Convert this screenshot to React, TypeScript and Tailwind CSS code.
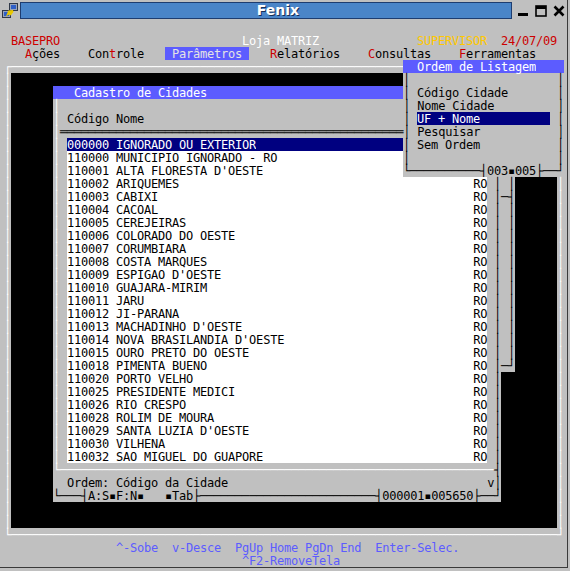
import React from 'react'

// Terminal screen: 80 cols x 42 rows, each cell 7x13 px
const COLS = 80
const ROWS = 42

type Cell = { ch: string; fg: string; bg: string }

const FG: Record<string, string> = {
  k: 'text-[#000000]',
  w: 'text-[#ffffff]',
  r: 'text-[#cd0000]',
  y: 'text-[#ffc800]',
  b: 'text-[#5c5cff]',
  l: 'text-[#e4e4e4]',
}

// gray cells stay transparent so descenders are not covered by the next row
const BG: Record<string, string> = {
  g: 'bg-transparent',
  k: 'bg-[#000000]',
  b: 'bg-[#5c5cff]',
  n: 'bg-[#000080]',
  w: 'bg-[#ffffff]',
}

const CITIES: [string, string][] = [
  ['000000', 'IGNORADO OU EXTERIOR'],
  ['110000', 'MUNICIPIO IGNORADO - RO'],
  ['110001', "ALTA FLORESTA D'OESTE"],
  ['110002', 'ARIQUEMES'],
  ['110003', 'CABIXI'],
  ['110004', 'CACOAL'],
  ['110005', 'CEREJEIRAS'],
  ['110006', 'COLORADO DO OESTE'],
  ['110007', 'CORUMBIARA'],
  ['110008', 'COSTA MARQUES'],
  ['110009', "ESPIGAO D'OESTE"],
  ['110010', 'GUAJARA-MIRIM'],
  ['110011', 'JARU'],
  ['110012', 'JI-PARANA'],
  ['110013', "MACHADINHO D'OESTE"],
  ['110014', "NOVA BRASILANDIA D'OESTE"],
  ['110015', 'OURO PRETO DO OESTE'],
  ['110018', 'PIMENTA BUENO'],
  ['110020', 'PORTO VELHO'],
  ['110025', 'PRESIDENTE MEDICI'],
  ['110026', 'RIO CRESPO'],
  ['110028', 'ROLIM DE MOURA'],
  ['110029', "SANTA LUZIA D'OESTE"],
  ['110030', 'VILHENA'],
  ['110032', 'SAO MIGUEL DO GUAPORE'],
]

function buildScreen() {
  const s: Cell[][] = Array.from({ length: ROWS }, () =>
    Array.from({ length: COLS }, () => ({ ch: ' ', fg: 'k', bg: 'g' }))
  )
  const put = (r: number, c: number, text: string, fg = 'k', bg?: string) => {
    ;[...text].forEach((ch, i) => {
      const cell = s[r]?.[c + i]
      if (!cell) return
      cell.ch = ch
      cell.fg = fg
      if (bg) cell.bg = bg
    })
  }
  const fill = (r0: number, r1: number, c0: number, c1: number, bg: string, ch = ' ', fg = 'k') => {
    for (let r = r0; r <= r1; r++)
      for (let c = c0; c <= c1; c++) s[r][c] = { ch, fg, bg }
  }

  // header
  put(1, 1, 'BASEPRO', 'r')
  put(1, 34, 'Loja MATRIZ', 'w')
  put(1, 59, 'SUPERVISOR', 'y')
  put(1, 71, '24/07/09', 'r')

  // menu
  put(2, 3, 'A', 'r'); put(2, 4, 'ções')
  put(2, 12, 'Con'); put(2, 15, 't', 'r'); put(2, 16, 'role')
  put(2, 23, ' Parâmetros ', 'l', 'b')
  put(2, 38, 'R', 'r'); put(2, 39, 'elatórios')
  put(2, 52, 'C', 'r'); put(2, 53, 'onsultas')
  put(2, 65, 'F', 'r'); put(2, 66, 'erramentas')

  // outer frame + black desktop
  put(3, 0, '┌' + '─'.repeat(78) + '┐', 'w')
  for (let r = 4; r <= 38; r++) {
    put(r, 0, '│', 'w')
    put(r, 79, '│', 'w')
  }
  fill(4, 38, 1, 78, 'k')
  put(39, 0, '└' + '─'.repeat(78) + '┘', 'w')

  // window behind the dialog
  fill(12, 26, 71, 72, 'g')
  for (let r = 12; r <= 25; r++) put(r, 72, '│')
  put(13, 71, '─┤')
  put(26, 71, '─┘')

  // dialog Cadastro de Cidades
  fill(5, 36, 7, 70, 'g')
  fill(5, 5, 7, 70, 'b')
  put(5, 10, 'Cadastro de Cidades', 'w', 'b')
  for (let r = 6; r <= 33; r++) {
    put(r, 7, '│', 'w')
    put(r, 70, '│')
  }
  put(7, 9, 'Código Nome')
  put(8, 8, '═'.repeat(62))
  fill(9, 33, 9, 68, 'w')
  CITIES.forEach(([code, name], i) => {
    const r = 9 + i
    if (i === 0) {
      fill(r, r, 9, 68, 'n')
      put(r, 9, `${code} ${name}`, 'w', 'n')
      put(r, 67, 'RO', 'w', 'n')
    } else {
      put(r, 9, `${code} ${name}`)
      put(r, 67, 'RO')
    }
  })
  put(34, 7, '└' + '─'.repeat(62), 'w')
  put(34, 70, '┤')
  put(35, 9, 'Ordem: Código da Cidade')
  put(35, 69, 'v')
  put(35, 70, '│')
  put(36, 7, '└───┤A:S▪F:N▪   ▪Tab├' + '─'.repeat(25) + '┤000001▪005650├──┘')

  // popup Ordem de Listagem
  fill(3, 11, 57, 79, 'g')
  fill(3, 3, 57, 79, 'b')
  put(3, 59, 'Ordem de Listagem', 'w', 'b')
  for (let r = 4; r <= 10; r++) {
    put(r, 57, '│')
    put(r, 79, '│')
  }
  put(5, 59, 'Código Cidade')
  put(6, 59, 'Nome Cidade')
  fill(7, 7, 59, 77, 'n')
  put(7, 59, 'UF + Nome', 'w', 'n')
  put(8, 59, 'Pesquisar')
  put(9, 59, 'Sem Ordem')
  put(11, 57, '└' + '─'.repeat(10) + '┤003▪005├──┘')

  // key help
  put(40, 16, '^-Sobe  v-Desce  PgUp Home PgDn End  Enter-Selec.', 'b')
  put(41, 34, '^F2-RemoveTela', 'b')

  return s
}

type Seg = { text: string; fg: string; bg: string; n: number }

function groupRow(row: Cell[]) {
  const segs: Seg[] = []
  row.forEach(cell => {
    const last = segs[segs.length - 1]
    if (last && last.fg === cell.fg && last.bg === cell.bg) {
      last.text += cell.ch
      last.n++
    } else segs.push({ text: cell.ch, fg: cell.fg, bg: cell.bg, n: 1 })
  })
  return segs
}

function Terminal() {
  const screen = buildScreen()
  return (
    <div className="pl-[4px] font-['DejaVu_Sans_Mono',monospace] text-[12px] leading-[15px] tracking-[-0.22px] whitespace-pre">
      {screen.map((row, r) => (
        <div key={r} className="flex h-[13px]">
          {groupRow(row).map((seg, i) => (
            <span key={i}
              className={`inline-block h-[13px] overflow-visible ${FG[seg.fg]} ${BG[seg.bg]}`}
              style={{ width: seg.n * 7 }}>
              {seg.text}
            </span>
          ))}
        </div>
      ))}
    </div>
  )
}

function AppIcon() {
  return (
    <svg width="16" height="16" viewBox="0 0 16 16">
      <rect x="7.5" y="0.5" width="8" height="7" fill="#9aa4b8" stroke="#303848" />
      <rect x="9" y="2" width="5" height="4" fill="#2f5fc8" />
      <rect x="0.5" y="7.5" width="8" height="7" fill="#9aa4b8" stroke="#303848" />
      <rect x="2" y="9" width="5" height="4" fill="#2f5fc8" />
      <path d="M11 8 L6 11 L7 8.5 Z M11 8 L8 12" stroke="#e8c800" strokeWidth="2" fill="#ffd800" />
    </svg>
  )
}

function TitleBar() {
  return (
    <div className="h-[21px] flex items-center">
      <div className="w-[20px] h-[21px] flex items-center justify-center">
        <AppIcon />
      </div>
      <div className="w-[492px] h-[17px] bg-[#4a85c8] border border-[#1e3d70] flex items-center justify-center pl-[24px]">
        <span className="font-['DejaVu_Sans',sans-serif] font-bold text-[14px] leading-[15px] text-white [text-shadow:1px_1px_0_#183058]">
          Fenix
        </span>
      </div>
      <div className="flex items-center gap-[6px] ml-[5px]">
        <svg width="12" height="12" viewBox="0 0 12 12">
          <rect x="1" y="8" width="10" height="3" fill="#000" />
        </svg>
        <svg width="12" height="12" viewBox="0 0 12 12">
          <rect x="1" y="1" width="10" height="10" fill="none" stroke="#000" strokeWidth="1.6" />
          <rect x="1" y="1" width="10" height="3" fill="#000" />
        </svg>
        <svg width="12" height="12" viewBox="0 0 12 12">
          <path d="M1.5 1.5 L10.5 10.5 M10.5 1.5 L1.5 10.5" stroke="#000" strokeWidth="2.6" />
        </svg>
      </div>
    </div>
  )
}

export default function App() {
  return (
    <div className="w-[570px] h-[571px] bg-[#c0c0c0] overflow-hidden">
      <div className="w-[568px] h-[568px] border-r border-b border-[#3a3a3a]">
        <TitleBar />
        <Terminal />
      </div>
    </div>
  )
}
